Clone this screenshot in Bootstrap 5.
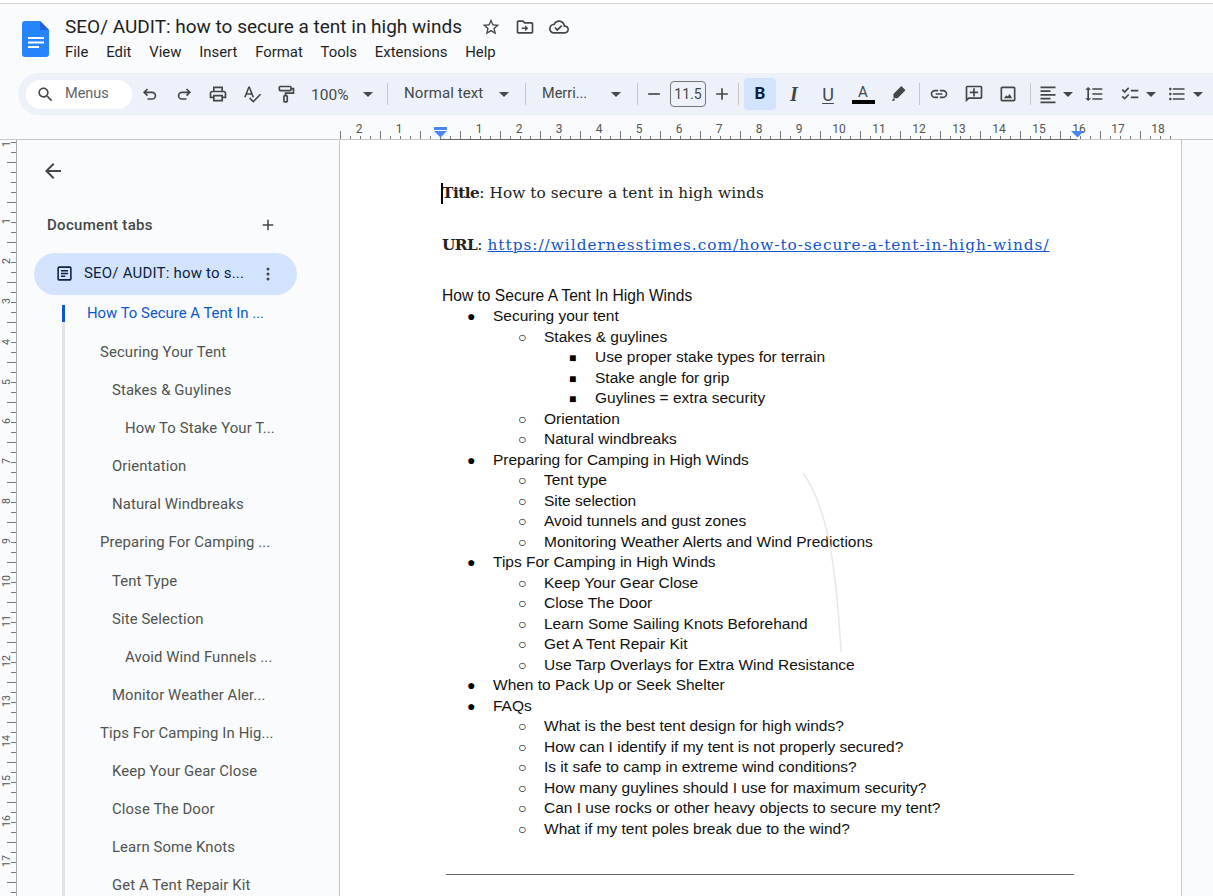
<!doctype html>
<html lang="en">
<head>
<meta charset="utf-8">
<title>SEO/ AUDIT: how to secure a tent in high winds</title>
<link href="https://cdn.jsdelivr.net/npm/bootstrap@5.3.0/dist/css/bootstrap.min.css" rel="stylesheet">
<style>
html,body{height:896px;overflow:hidden}
body{background:#f9fbfd;font-family:Roboto,"Liberation Sans",sans-serif;color:#444746;border-top:1px solid #d4d4d4;margin-top:3px}
html{background:#fff}
.doc-head{height:69px;padding-left:22px}
.doc-logo{width:27px;height:36px;margin-top:17px;flex:none}
.doc-meta{margin-left:16px}
.doc-title-row{height:24px;margin-top:11px}
.doc-title{font-size:19px;line-height:24px;color:#1f1f1f;width:398px;white-space:nowrap}
.head-ic{width:20px;height:20px;fill:#444746;margin-left:14px}
.head-ic.first{margin-left:18px}
.menu-row{gap:17.800px;font-size:14.900px;color:#1f1f1f;line-height:20px;margin-top:3px}
.tool-bar{height:42px;margin-left:18px;background:#edf2fa;border-radius:21px 0 0 21px;padding-left:8px;font-size:14.5px;color:#444746;white-space:nowrap}
.find-pill{width:106px;height:29px;background:#fff;border-radius:15px;padding-left:10px;gap:10px;color:#5f6368}
.tb{width:34px;height:32px;flex:none;display:flex;align-items:center;justify-content:center}
.tb svg{width:20px;height:20px;fill:#444746}
.tb svg.line{fill:none;stroke:#444746;stroke-width:2}
.car{width:20px;height:20px;flex:none;display:flex;align-items:center;justify-content:center}
.car::before{content:"";border-left:5px solid transparent;border-right:5px solid transparent;border-top:5px solid #444746}
.car.nar{width:16px}
.sep{width:1px;height:22px;background:#c7c7c7;flex:none}
.z-txt{width:40px;margin-left:8px;font-size:15.500px;padding-top:3px}
.s-txt{width:80px;margin-left:16px;font-size:15px;letter-spacing:.1px;padding-bottom:2px}
.f-txt{width:45px;margin-left:16px}
.ml-a{margin-left:9px}.ml-b{margin-left:10px}.ml-c{margin-left:19px}.ml-d{margin-left:6px}.ml-e{margin-left:5px}.ml-f{margin-left:1px}.ml-g{margin-left:2px}.ml-h{margin-left:5px}.ml-i{margin-left:11px}.ml-j{margin-left:7px}.ml-k{margin-left:-4px}.ml-l{margin-left:4px}
.tb.n20{width:20px}.tb.n24{width:24px}
.size-box{width:36px;height:26px;border:1px solid #747775;border-radius:4px;display:flex;align-items:center;justify-content:center;color:#444746;font-size:14px;flex:none}
.bold-btn{width:32px;background:#d3e3fd;border-radius:4px;font-weight:700;color:#0b1f44;font-size:17px;font-family:Roboto,sans-serif}
.ital{font-style:italic;font-weight:700;font-size:20px;font-family:"Liberation Serif",serif}
.und{text-decoration:underline;font-size:18px;text-underline-offset:2px}
.col-a{flex-direction:column;line-height:14px;font-size:15px}
.col-a i{display:block;width:23px;height:4px;background:#000;margin-top:1px}
.ruler-h{display:block;margin-top:7px;height:18px;width:1213px}
.ruler-v{width:18px;height:760px;flex:none;display:block}
.work{height:760px}
.side{width:321px;flex:none;position:relative}
.back-ic{width:24px;height:24px;fill:#444746;display:block;margin:19px 0 0 23px}
.tabs-head{height:20px;margin:32px 0 0 29px;width:230px;font-size:15px;letter-spacing:.3px;font-weight:500;color:#444746}
.tabs-head svg{width:18px;height:18px;fill:#444746}
.tab-pill{width:263px;height:42px;margin:18px 0 0 16px;background:#d3e3fd;border-radius:21px;padding-left:22px;padding-bottom:1px;color:#0b1f44;font-size:15px;letter-spacing:.2px;white-space:nowrap}
.tab-pill svg{width:17px;height:17px;margin-right:11px;flex:none}
.tab-pill svg.kebab{margin-left:auto;margin-right:27px;width:4px;height:14px;fill:#444746}
.outline{margin:10px 0 0 44px;border-left:3px solid #e1e3e6;font-size:14.9px;letter-spacing:.1px;color:#50534f;height:600px;list-style:none;padding:0}
.outline li{height:38.100px;line-height:38.100px;white-space:nowrap}
.outline li.cur{height:17px;line-height:17px;margin-bottom:11px;margin-left:-3px;border-left:3px solid #0b57d0;padding-left:22px;color:#0b57d0;letter-spacing:0}
.outline .l1{padding-left:35px}.outline .l2{padding-left:47px}.outline .l3{padding-left:60px}
.paper{width:843px;flex:none;background:#fff;border-left:1px solid #c7c7c7;border-right:1px solid #c7c7c7;position:relative;padding:40px 0 0 102px;color:#111}
.serif-p{font-family:"DejaVu Serif",serif;font-size:15.300px;line-height:26px;margin:0 0 26px;color:#222;white-space:nowrap;letter-spacing:.08px}
.serif-p a{color:#1155cc;letter-spacing:1px}
.serif-p b{font-weight:700;letter-spacing:-.5px}
.arial-h{font-family:"Liberation Sans",Arial,sans-serif;font-size:15.600px;line-height:20.500px;margin:28px 0 0}
.caret-bar{position:absolute;left:101px;top:43px;width:2px;height:21px;background:#000}
.bul,.bul ul{list-style:none;margin:0;padding:0 0 0 51px;font-family:"Liberation Sans",Arial,sans-serif;font-size:15.500px;line-height:20.520px}
.bul{margin-top:-.5px}
.bul li::before{display:inline-block;width:31px;margin-left:-31px;font-size:14px;content:"\25CF";vertical-align:0;text-indent:5px;line-height:1;color:#000}
.bul ul>li::before{content:"\25CB";font-size:14px;text-indent:5px}
.bul ul ul>li::before{content:"\25A0";font-size:12px;text-indent:5px}
.doc-rule{width:628px;height:1px;background:#666;margin:34.500px 0 0 4px}
.pen-line{position:absolute;left:462px;top:332px;width:40px;height:182px;fill:none;stroke:#e8e8e8;stroke-width:1.5}
</style>
</head>
<body>
<header class="doc-head d-flex">
  <svg class="doc-logo" viewBox="0 0 27 36"><path d="M3 0h15l9 9v24a3 3 0 0 1-3 3H3a3 3 0 0 1-3-3V3a3 3 0 0 1 3-3z" fill="#2684fc"/><path d="M18 0l9 9h-9z" fill="#1a66d6"/><path d="M6 16h16v2H6zM6 20.500h16v2H6zM6 25h11v2H6z" fill="#fff"/></svg>
  <div class="doc-meta">
    <div class="doc-title-row d-flex align-items-center">
      <div class="doc-title">SEO/ AUDIT: how to secure a tent in high winds</div>
      <svg class="head-ic first" viewBox="0 0 24 24"><path d="M22 9.240l-7.190-.62L12 2 9.190 8.630 2 9.240l5.460 4.730L5.820 21 12 17.270 18.180 21l-1.630-7.030L22 9.240zM12 15.400l-3.760 2.270 1-4.280-3.320-2.880 4.380-.38L12 6.100l1.710 4.040 4.380.38-3.320 2.880 1 4.280L12 15.400z"/></svg>
      <svg class="head-ic" viewBox="0 0 24 24"><path d="M20 6h-8l-2-2H4c-1.100 0-2 .9-2 2v12c0 1.100.9 2 2 2h16c1.100 0 2-.9 2-2V8c0-1.100-.9-2-2-2zm0 12H4V6h5.170l2 2H20v10z"/><path d="M12 17l4-3.500-4-3.500v2.500H8v2h4z"/></svg>
      <svg class="head-ic" viewBox="0 0 24 24"><path d="M19.350 10.040C18.670 6.590 15.640 4 12 4 9.110 4 6.600 5.640 5.350 8.040 2.340 8.360 0 10.910 0 14c0 3.310 2.690 6 6 6h13c2.760 0 5-2.240 5-5 0-2.640-2.050-4.780-4.650-4.960zM19 18H6c-2.210 0-4-1.790-4-4 0-2.050 1.530-3.760 3.560-3.970l1.070-.11.5-.95C8.080 7.140 9.940 6 12 6c2.620 0 4.880 1.860 5.390 4.430l.3 1.500 1.530.11c1.560.1 2.780 1.410 2.780 2.960 0 1.650-1.350 3-3 3zm-9-3.820l-2.090-2.090L6.500 13.500 10 17l6.010-6.010-1.410-1.410z"/></svg>
    </div>
    <nav class="menu-row d-flex">
      <span>File</span><span>Edit</span><span>View</span><span>Insert</span><span>Format</span><span>Tools</span><span>Extensions</span><span>Help</span>
    </nav>
  </div>
</header>

<div class="tool-bar d-flex align-items-center">
  <div class="find-pill d-flex align-items-center">
    <svg width="19" height="19" viewBox="0 0 24 24" fill="#444746"><path d="M15.500 14h-.79l-.28-.27C15.410 12.590 16 11.110 16 9.500 16 5.910 13.090 3 9.500 3S3 5.910 3 9.500 5.910 16 9.500 16c1.610 0 3.090-.59 4.230-1.570l.27.28v.79l5 4.990L20.490 19l-4.990-5zm-6 0C7.010 14 5 11.990 5 9.500S7.010 5 9.500 5 14 7.010 14 9.500 11.990 14 9.500 14z"/></svg>
    <span>Menus</span>
  </div>
  <div class="tb ml-f"><svg class="line" viewBox="0 0 24 24"><path d="M9 6L5 10l4 4M5 10h9.500a4 4 0 0 1 0 8H9"/></svg></div>
  <div class="tb"><svg class="line" viewBox="0 0 24 24"><path d="M15 6l4 4-4 4M19 10H9.500a4 4 0 0 0 0 8H15"/></svg></div>
  <div class="tb"><svg viewBox="0 0 24 24"><path d="M19 8h-1V3H6v5H5c-1.660 0-3 1.340-3 3v6h4v4h12v-4h4v-6c0-1.660-1.340-3-3-3zM8 5h8v3H8V5zm8 12v2H8v-4h8v2zm2-2v-2H6v2H4v-4c0-.55.45-1 1-1h14c.55 0 1 .45 1 1v4h-2z"/></svg></div>
  <div class="tb"><svg viewBox="0 0 24 24"><path d="M12.450 16h2.090L9.430 3H7.570L2.460 16h2.090l1.120-3h5.640l1.140 3zm-6.020-5L8.500 5.480 10.570 11H6.430zm15.160.59l-8.090 8.090L9.830 16l-1.410 1.410 5.090 5.090L23 13l-1.410-1.410z"/></svg></div>
  <div class="tb"><svg class="line" viewBox="0 0 24 24"><rect x="4" y="3" width="14" height="5" rx="1"/><path d="M18 5.500h3V11H11.500v3"/><rect x="9.500" y="14" width="4" height="7.500" rx="1"/></svg></div>
  <span class="z-txt">100%</span><div class="car ml-j"></div>
  <div class="sep ml-a"></div>
  <span class="s-txt">Normal text</span><div class="car ml-b"></div>
  <div class="sep ml-i"></div>
  <span class="f-txt">Merri...</span><div class="car ml-c"></div>
  <div class="sep ml-i"></div>
  <div class="tb n20 ml-d"><svg viewBox="0 0 24 24"><path d="M5 11h14v2H5z"/></svg></div>
  <div class="size-box ml-d">11.5</div>
  <div class="tb n20 ml-d"><svg viewBox="0 0 24 24"><path d="M19 13h-6v6h-2v-6H5v-2h6V5h2v6h6v2z"/></svg></div>
  <div class="sep ml-d"></div>
  <div class="tb bold-btn ml-e">B</div>
  <div class="tb ital ml-f">I</div>
  <div class="tb und">U</div>
  <div class="tb col-a ml-f">A<i></i></div>
  <div class="tb ml-f"><svg viewBox="0 0 24 24"><path d="M16 2.500l5 5L11.500 17h-4l-1-1v-4zM4.500 20l2-3 2 2-1 1z"/></svg></div>
  <div class="sep ml-l"></div>
  <div class="tb ml-g"><svg viewBox="0 0 24 24"><path d="M3.900 12c0-1.710 1.390-3.100 3.100-3.100h4V7H7c-2.760 0-5 2.240-5 5s2.240 5 5 5h4v-1.900H7c-1.710 0-3.100-1.390-3.100-3.100zM8 13h8v-2H8v2zm9-6h-4v1.900h4c1.710 0 3.100 1.390 3.100 3.100s-1.390 3.100-3.100 3.100h-4V17h4c2.760 0 5-2.240 5-5s-2.240-5-5-5z"/></svg></div>
  <div class="tb ml-f"><svg viewBox="0 0 24 24"><path d="M20 2H4c-1.100 0-2 .9-2 2v18l4-4h14c1.100 0 2-.9 2-2V4c0-1.100-.9-2-2-2zm0 14H5.170L4 17.170V4h16v12z"/><path d="M13 5h-2v4H7v2h4v4h2v-4h4V9h-4z"/></svg></div>
  <div class="tb"><svg viewBox="0 0 24 24"><path d="M19 5v14H5V5h14m0-2H5c-1.100 0-2 .9-2 2v14c0 1.100.9 2 2 2h14c1.100 0 2-.9 2-2V5c0-1.100-.9-2-2-2z"/><path d="M14 12l-2.500 3-1.500-1.500L7 17h10z"/></svg></div>
  <div class="sep ml-h"></div>
  <div class="tb n24 ml-e"><svg viewBox="0 0 24 24"><path d="M3 3h18v2H3zM3 7.500h12v2H3zM3 12h18v2H3zM3 16.500h12v2H3zM3 21h18v2H3z"/></svg></div>
  <div class="car nar"></div>
  <div class="tb ml-f"><svg viewBox="0 0 24 24"><path d="M6 7h2.500L5 3.500 1.500 7H4v10H1.500L5 20.500 8.500 17H6V7zm4-2v2h12V5H10zm0 14h12v-2H10v2zm0-6h12v-2H10v2z"/></svg></div>
  <div class="tb ml-g"><svg viewBox="0 0 24 24"><path d="M22 7h-9v2h9V7zm0 8h-9v2h9v-2zM5.540 11L2 7.460l1.410-1.410 2.120 2.120 4.240-4.240 1.410 1.410L5.540 11zm0 8L2 15.460l1.410-1.410 2.120 2.120 4.240-4.240 1.410 1.410L5.540 19z"/></svg></div>
  <div class="car nar ml-k"></div>
  <div class="tb n24 ml-d"><svg viewBox="0 0 24 24"><path d="M4 10.500c-.83 0-1.500.67-1.500 1.500s.67 1.500 1.500 1.500 1.500-.67 1.500-1.500-.67-1.500-1.500-1.500zm0-6c-.83 0-1.500.67-1.500 1.500S3.170 7.500 4 7.500 5.500 6.830 5.500 6 4.830 4.500 4 4.500zm0 12c-.83 0-1.500.68-1.500 1.500s.68 1.500 1.500 1.500 1.500-.68 1.500-1.500-.67-1.500-1.500-1.500zM7 19h14v-2H7v2zm0-6h14v-2H7v2zm0-8v2h14V5H7z"/></svg></div>
  <div class="car nar ml-f"></div>
</div>

<svg class="ruler-h" viewBox="0 122 1213 18" font-family="Roboto,sans-serif" font-size="12" fill="#555" text-anchor="middle">
  <defs>
    <pattern id="rh" width="40" height="18" patternUnits="userSpaceOnUse" x="340" y="122">
      <rect x="0" y="9" width="1" height="8" fill="#777"/><rect x="10" y="14" width="1" height="3" fill="#777"/><rect x="20" y="14" width="1" height="3" fill="#777"/><rect x="30" y="14" width="1" height="3" fill="#777"/>
    </pattern>
  </defs>
  <rect x="340" y="122" width="840" height="17" fill="url(#rh)"/>
  <rect x="0" y="139" width="1213" height="1" fill="#c7c7c7"/>
  <rect x="440" y="139" width="637" height="1" fill="#666"/>
  <text x="359" y="133">2</text><text x="399" y="133">1</text>
  <text x="479" y="133">1</text><text x="519" y="133">2</text><text x="559" y="133">3</text><text x="599" y="133">4</text><text x="639" y="133">5</text><text x="679" y="133">6</text><text x="719" y="133">7</text><text x="759" y="133">8</text><text x="799" y="133">9</text><text x="839" y="133">10</text><text x="879" y="133">11</text><text x="919" y="133">12</text><text x="959" y="133">13</text><text x="999" y="133">14</text><text x="1039" y="133">15</text><text x="1079" y="133">16</text><text x="1118" y="133">17</text><text x="1158" y="133">18</text>
  <path d="M434 127h13v3h-13zM434 131h13l-6.500 6.500z" fill="#4a86f0"/>
  <path d="M1071 131h13l-6.500 6.500z" fill="#4a86f0"/>
</svg>

<main class="work d-flex">
  <svg class="ruler-v" viewBox="0 0 18 760" font-family="Roboto,sans-serif" font-size="10.500" fill="#555" text-anchor="middle">
    <defs>
      <pattern id="rv" width="18" height="40" patternUnits="userSpaceOnUse" x="0" y="-18">
        <rect x="7" y="0" width="9" height="1" fill="#777"/><rect x="11" y="10" width="5" height="1" fill="#777"/><rect x="11" y="20" width="5" height="1" fill="#777"/><rect x="11" y="30" width="5" height="1" fill="#777"/>
      </pattern>
    </defs>
    <rect x="0" y="0" width="17" height="760" fill="url(#rv)"/>
    <rect x="16" y="0" width="1" height="760" fill="#aaa"/>
    <g>
      <text transform="translate(10 4) rotate(-90)">1</text>
      <text transform="translate(10 81) rotate(-90)">1</text><text transform="translate(10 121) rotate(-90)">2</text><text transform="translate(10 161) rotate(-90)">3</text><text transform="translate(10 202) rotate(-90)">4</text><text transform="translate(10 242) rotate(-90)">5</text><text transform="translate(10 281) rotate(-90)">6</text><text transform="translate(10 321) rotate(-90)">7</text><text transform="translate(10 361) rotate(-90)">8</text><text transform="translate(10 401) rotate(-90)">9</text><text transform="translate(10 441) rotate(-90)">10</text><text transform="translate(10 481) rotate(-90)">11</text><text transform="translate(10 521) rotate(-90)">12</text><text transform="translate(10 561) rotate(-90)">13</text><text transform="translate(10 601) rotate(-90)">14</text><text transform="translate(10 641) rotate(-90)">15</text><text transform="translate(10 681) rotate(-90)">16</text><text transform="translate(10 721) rotate(-90)">17</text>
    </g>
  </svg>

  <aside class="side">
    <svg class="back-ic" viewBox="0 0 24 24"><path d="M20 11H7.830l5.590-5.590L12 4l-8 8 8 8 1.410-1.410L7.830 13H20v-2z"/></svg>
    <div class="tabs-head d-flex align-items-center justify-content-between">
      <span>Document tabs</span>
      <svg viewBox="0 0 24 24"><path d="M19 13h-6v6h-2v-6H5v-2h6V5h2v6h6v2z"/></svg>
    </div>
    <div class="tab-pill d-flex align-items-center">
      <svg viewBox="0 0 24 24" fill="none" stroke="#0b1f44" stroke-width="2.200"><rect x="3" y="3" width="18" height="18" rx="1.500"/><path d="M7 8h10M7 12h10M7 16h6"/></svg>
      <span>SEO/ AUDIT: how to s...</span>
      <svg class="kebab" viewBox="0 0 4 14"><circle cx="2" cy="2" r="1.500"/><circle cx="2" cy="7" r="1.500"/><circle cx="2" cy="12" r="1.500"/></svg>
    </div>
    <ul class="outline">
      <li class="cur">How To Secure A Tent In ...</li>
      <li class="l1">Securing Your Tent</li>
      <li class="l2">Stakes &amp; Guylines</li>
      <li class="l3">How To Stake Your T...</li>
      <li class="l2">Orientation</li>
      <li class="l2">Natural Windbreaks</li>
      <li class="l1">Preparing For Camping ...</li>
      <li class="l2">Tent Type</li>
      <li class="l2">Site Selection</li>
      <li class="l3">Avoid Wind Funnels ...</li>
      <li class="l2">Monitor Weather Aler...</li>
      <li class="l1">Tips For Camping In Hig...</li>
      <li class="l2">Keep Your Gear Close</li>
      <li class="l2">Close The Door</li>
      <li class="l2">Learn Some Knots</li>
      <li class="l2">Get A Tent Repair Kit</li>
    </ul>
  </aside>

  <section class="paper">
    <span class="caret-bar"></span>
    <p class="serif-p"><b>Title</b>: How to secure a tent in high winds</p>
    <p class="serif-p"><b>URL</b>: <a href="#">https://wildernesstimes.com/how-to-secure-a-tent-in-high-winds/</a></p>
    <p class="arial-h">How to Secure A Tent In High Winds</p>
    <ul class="bul">
      <li>Securing your tent
        <ul>
          <li>Stakes &amp; guylines
            <ul>
              <li>Use proper stake types for terrain</li>
              <li>Stake angle for grip</li>
              <li>Guylines = extra security</li>
            </ul>
          </li>
          <li>Orientation</li>
          <li>Natural windbreaks</li>
        </ul>
      </li>
      <li>Preparing for Camping in High Winds
        <ul>
          <li>Tent type</li>
          <li>Site selection</li>
          <li>Avoid tunnels and gust zones</li>
          <li>Monitoring Weather Alerts and Wind Predictions</li>
        </ul>
      </li>
      <li>Tips For Camping in High Winds
        <ul>
          <li>Keep Your Gear Close</li>
          <li>Close The Door</li>
          <li>Learn Some Sailing Knots Beforehand</li>
          <li>Get A Tent Repair Kit</li>
          <li>Use Tarp Overlays for Extra Wind Resistance</li>
        </ul>
      </li>
      <li>When to Pack Up or Seek Shelter</li>
      <li>FAQs
        <ul>
          <li>What is the best tent design for high winds?</li>
          <li>How can I identify if my tent is not properly secured?</li>
          <li>Is it safe to camp in extreme wind conditions?</li>
          <li>How many guylines should I use for maximum security?</li>
          <li>Can I use rocks or other heavy objects to secure my tent?</li>
          <li>What if my tent poles break due to the wind?</li>
        </ul>
      </li>
    </ul>
    <div class="doc-rule"></div>
    <svg class="pen-line" viewBox="0 0 40 182"><path d="M1 1C24 33 34 88 39 180"/></svg>
  </section>
</main>
<script src="https://cdn.jsdelivr.net/npm/bootstrap@5.3.0/dist/js/bootstrap.bundle.min.js"></script>
</body>
</html>
